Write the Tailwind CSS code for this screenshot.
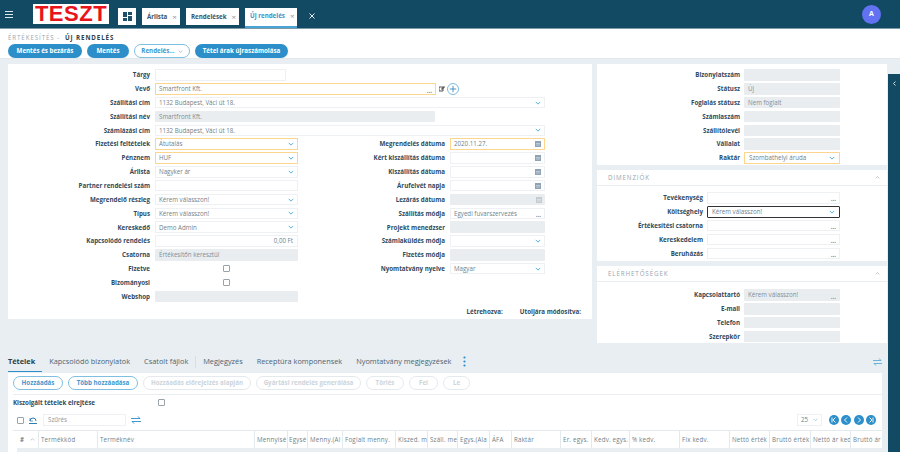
<!DOCTYPE html>
<html lang="hu">
<head>
<meta charset="UTF-8" />
<title>Új rendelés</title>
<script src="https://cdn.jsdelivr.net/npm/@tailwindcss/browser@4"></script>
</head>
<body class="bg-[#e9eef2] overflow-hidden font-['Open_Sans',sans-serif] text-[6.2px] text-[#6f7f8a]">
<div class="w-[900px] h-[452px] flex flex-col overflow-hidden">

  <!-- Header -->
  <header class="h-[29px] shrink-0 bg-[#134a63] border-b border-[#7d9aa8] flex items-start relative">
    <svg class="w-[8px] h-[7px] ml-[5px] mt-[11px]" viewBox="0 0 8 7"><path d="M0 .5h8M0 3.5h8M0 6.5h8" stroke="#dfe8ec" stroke-width="1"/></svg>
    <div class="ml-[20px] mt-[4px] w-[76px] h-[20px] bg-white flex items-center justify-center font-['Liberation_Sans',sans-serif] font-bold text-[22px] tracking-[0.5px] text-[#e8131b] leading-none">TESZT</div>
    <div class="ml-[9px] mt-[8px] w-[18px] h-[17px] bg-white flex items-center justify-center">
      <svg class="w-[9px] h-[9px]" viewBox="0 0 9 9"><path d="M0 0h4v5H0zM5 0h4v3H5zM5 4h4v5H5zM0 6h4v3H0z" fill="#1d4f68"/></svg>
    </div>
    <div class="ml-[6px] mt-[8px] w-[38px] h-[17px] bg-white flex items-center pl-[5px] gap-[5px] font-bold text-[#3d5361]">Árlista <span class="text-[#8a98a2] font-normal text-[8px] leading-none">×</span></div>
    <div class="ml-[6px] mt-[8px] w-[53px] h-[17px] bg-white flex items-center pl-[5px] gap-[5px] font-bold text-[#3d5361]">Rendelések <span class="text-[#8a98a2] font-normal text-[8px] leading-none">×</span></div>
    <div class="ml-[6px] mt-[8px] w-[52px] h-[20px] bg-white border-b-2 border-[#4aa3d4] flex items-center pl-[5px] pb-[2px] gap-[5px] font-bold text-[#3a94c8]">Új rendelés <span class="text-[#8a98a2] font-normal text-[8px] leading-none">×</span></div>
    <svg class="ml-[12px] mt-[13px] w-[6px] h-[6px]" viewBox="0 0 6 6"><path d="M.5.5l5 5M5.5.5l-5 5" stroke="#e6edf0" stroke-width="1"/></svg>
    <div class="absolute left-[862px] top-[5px] w-[19px] h-[19px] rounded-full bg-[#6272f2] flex items-center justify-center text-white font-bold text-[7px]">A</div>
  </header>

  <!-- Breadcrumb + actions -->
  <div class="h-[30px] shrink-0 bg-white pl-[8px] pt-[4px] border-b border-[#e4e9ed]">
    <div class="h-[10px] flex items-center tracking-[0.9px] leading-none">
      <span class="text-[#9aa7b0]">ÉRTÉKESÍTÉS -</span>
      <span class="ml-[5px] font-bold text-[#2c3e4a]">ÚJ RENDELÉS</span>
    </div>
    <div class="flex gap-[5px] mt-[1px] font-bold text-white">
      <div class="w-[74px] h-[14px] rounded-full bg-[#2c8fc9] flex items-center justify-center">Mentés és bezárás</div>
      <div class="w-[42px] h-[14px] rounded-full bg-[#2c8fc9] flex items-center justify-center">Mentés</div>
      <div class="w-[56px] h-[14px] rounded-full bg-white border border-[#7fbfe2] flex items-center justify-center gap-[3px] text-[#3f97cb]">Rendelés...
        <svg class="w-[5px] h-[3px]" viewBox="0 0 8 5"><path d="M1 1l3 3 3-3" stroke="#8a98a2" fill="none"/></svg>
      </div>
      <div class="w-[93px] h-[14px] rounded-full bg-[#2c8fc9] flex items-center justify-center">Tétel árak újraszámolása</div>
    </div>
  </div>

  <div class="flex flex-1 min-h-0">
    <div class="w-[888px] shrink-0 flex flex-col">
      <div class="flex pl-[8px] pt-[5px] h-[293px] shrink-0 items-start">

        <!-- Main form card -->
        <section class="w-[584px] h-[255px] bg-white pt-[4px] flex flex-col font-bold text-[#2f4a5c]">
          <div class="flex h-[13.85px] items-center"><label class="w-[142px] text-right mr-[5px]">Tárgy</label><div class="w-[131px] h-[11.5px] border border-[#eef1f4]"></div></div>
          <div class="flex h-[13.85px] items-center"><label class="w-[142px] text-right mr-[5px]">Vevő</label><div class="w-[281px] h-[12px] border border-[#fcd68f] flex items-center justify-between px-[3px] font-normal text-[#6f7f8a]">Smartfront Kft.<span class="text-[#6f7f8a] font-bold self-end leading-none">...</span></div>
            <svg class="ml-[3px] w-[6px] h-[6px]" viewBox="0 0 6 6"><path d="M0 1h4v4H0z" fill="none" stroke="#555"/><path d="M2 3l3-3 1 1-3 3z" fill="#555"/></svg>
            <svg class="ml-[2px] w-[12px] h-[12px]" viewBox="0 0 12 12"><circle cx="6" cy="6" r="5.5" fill="none" stroke="#5aa9d8" stroke-width=".8"/><path d="M6 2.8v6.4M2.8 6h6.4" stroke="#3f88b8" stroke-width=".9"/></svg>
          </div>
          <div class="flex h-[13.85px] items-center"><label class="w-[142px] text-right mr-[5px]">Szállítási cím</label><div class="w-[390px] h-[11.5px] border border-[#eef1f4] flex items-center justify-between px-[3px] font-normal text-[#6f7f8a]">1132 Budapest, Váci út 18.<svg class="w-[6px] h-[4px]" viewBox="0 0 8 5"><path d="M1 1l3 3 3-3" stroke="#4fb0e0" stroke-width="1.3" fill="none"/></svg></div></div>
          <div class="flex h-[13.85px] items-center"><label class="w-[142px] text-right mr-[5px]">Szállítási név</label><div class="w-[280px] h-[11.5px] rounded-[1px] bg-[#e9edf0] flex items-center px-[4px] font-normal text-[#808d97]">Smartfront Kft.</div></div>
          <div class="flex h-[13.85px] items-center"><label class="w-[142px] text-right mr-[5px]">Számlázási cím</label><div class="w-[390px] h-[11.5px] border border-[#eef1f4] flex items-center justify-between px-[3px] font-normal text-[#6f7f8a]">1132 Budapest, Váci út 18.<svg class="w-[6px] h-[4px]" viewBox="0 0 8 5"><path d="M1 1l3 3 3-3" stroke="#4fb0e0" stroke-width="1.3" fill="none"/></svg></div></div>

          <div class="flex">
            <!-- Left column -->
            <div class="w-[290px]">
              <div class="flex h-[13.85px] items-center"><label class="w-[142px] text-right mr-[5px]">Fizetési feltételek</label><div class="w-[143px] h-[12px] border border-[#fcd68f] flex items-center justify-between px-[3px] font-normal text-[#6f7f8a]">Átutalás<svg class="w-[6px] h-[4px]" viewBox="0 0 8 5"><path d="M1 1l3 3 3-3" stroke="#4fb0e0" stroke-width="1.3" fill="none"/></svg></div></div>
              <div class="flex h-[13.85px] items-center"><label class="w-[142px] text-right mr-[5px]">Pénznem</label><div class="w-[143px] h-[12px] border border-[#fcd68f] flex items-center justify-between px-[3px] font-normal text-[#6f7f8a]">HUF<svg class="w-[6px] h-[4px]" viewBox="0 0 8 5"><path d="M1 1l3 3 3-3" stroke="#4fb0e0" stroke-width="1.3" fill="none"/></svg></div></div>
              <div class="flex h-[13.85px] items-center"><label class="w-[142px] text-right mr-[5px]">Árlista</label><div class="w-[143px] h-[11.5px] border border-[#eef1f4] flex items-center justify-between px-[3px] font-normal text-[#6f7f8a]">Nagyker ár<svg class="w-[6px] h-[4px]" viewBox="0 0 8 5"><path d="M1 1l3 3 3-3" stroke="#4fb0e0" stroke-width="1.3" fill="none"/></svg></div></div>
              <div class="flex h-[13.85px] items-center"><label class="w-[142px] text-right mr-[5px]">Partner rendelési szám</label><div class="w-[143px] h-[11.5px] border border-[#eef1f4]"></div></div>
              <div class="flex h-[13.85px] items-center"><label class="w-[142px] text-right mr-[5px]">Megrendelő részleg</label><div class="w-[143px] h-[11.5px] border border-[#eef1f4] flex items-center justify-between px-[3px] font-normal text-[#6f7f8a]">Kérem válasszon!<svg class="w-[6px] h-[4px]" viewBox="0 0 8 5"><path d="M1 1l3 3 3-3" stroke="#4fb0e0" stroke-width="1.3" fill="none"/></svg></div></div>
              <div class="flex h-[13.85px] items-center"><label class="w-[142px] text-right mr-[5px]">Típus</label><div class="w-[143px] h-[11.5px] border border-[#eef1f4] flex items-center justify-between px-[3px] font-normal text-[#6f7f8a]">Kérem válasszon!<svg class="w-[6px] h-[4px]" viewBox="0 0 8 5"><path d="M1 1l3 3 3-3" stroke="#4fb0e0" stroke-width="1.3" fill="none"/></svg></div></div>
              <div class="flex h-[13.85px] items-center"><label class="w-[142px] text-right mr-[5px]">Kereskedő</label><div class="w-[143px] h-[11.5px] border border-[#eef1f4] flex items-center justify-between px-[3px] font-normal text-[#6f7f8a]">Demo Admin<svg class="w-[6px] h-[4px]" viewBox="0 0 8 5"><path d="M1 1l3 3 3-3" stroke="#4fb0e0" stroke-width="1.3" fill="none"/></svg></div></div>
              <div class="flex h-[13.85px] items-center"><label class="w-[142px] text-right mr-[5px]">Kapcsolódó rendelés</label><div class="w-[143px] h-[11.5px] border border-[#eef1f4] flex items-center justify-end px-[4px] font-normal text-[#6f7f8a]">0,00 Ft</div></div>
              <div class="flex h-[13.85px] items-center"><label class="w-[142px] text-right mr-[5px]">Csatorna</label><div class="w-[143px] h-[11.5px] rounded-[1px] bg-[#e9edf0] flex items-center px-[4px] font-normal text-[#808d97]">Értékesítőn keresztül</div></div>
              <div class="flex h-[13.85px] items-center"><label class="w-[142px] text-right mr-[5px]">Fizetve</label><div class="w-[143px] flex justify-center"><div class="w-[7px] h-[7px] rounded-[1px] border border-[#9aa3a9]"></div></div></div>
              <div class="flex h-[13.85px] items-center"><label class="w-[142px] text-right mr-[5px]">Bizományosi</label><div class="w-[143px] flex justify-center"><div class="w-[7px] h-[7px] rounded-[1px] border border-[#9aa3a9]"></div></div></div>
              <div class="flex h-[13.85px] items-center"><label class="w-[142px] text-right mr-[5px]">Webshop</label><div class="w-[143px] h-[11.5px] rounded-[1px] bg-[#e9edf0]"></div></div>
            </div>
            <!-- Right column -->
            <div class="w-[252px]">
              <div class="flex h-[13.85px] items-center"><label class="w-[147px] text-right mr-[5px]">Megrendelés dátuma</label><div class="w-[95px] h-[12px] border border-[#fcd68f] flex items-center justify-between px-[3px] font-normal text-[#6f7f8a]">2020.11.27.<svg class="w-[6px] h-[6px]" viewBox="0 0 6 6"><path d="M0 0h6v6H0z" fill="#8fa3b4"/><path d="M1 2.5h4M1 4h4" stroke="#dbe2e8" stroke-width=".6"/></svg></div></div>
              <div class="flex h-[13.85px] items-center"><label class="w-[147px] text-right mr-[5px]">Kért kiszállítás dátuma</label><div class="w-[95px] h-[11.5px] border border-[#eef1f4] flex items-center justify-end px-[3px]"><svg class="w-[6px] h-[6px]" viewBox="0 0 6 6"><path d="M0 0h6v6H0z" fill="#8fa3b4"/><path d="M1 2.5h4M1 4h4" stroke="#dbe2e8" stroke-width=".6"/></svg></div></div>
              <div class="flex h-[13.85px] items-center"><label class="w-[147px] text-right mr-[5px]">Kiszállítás dátuma</label><div class="w-[95px] h-[11.5px] border border-[#eef1f4] flex items-center justify-end px-[3px]"><svg class="w-[6px] h-[6px]" viewBox="0 0 6 6"><path d="M0 0h6v6H0z" fill="#8fa3b4"/><path d="M1 2.5h4M1 4h4" stroke="#dbe2e8" stroke-width=".6"/></svg></div></div>
              <div class="flex h-[13.85px] items-center"><label class="w-[147px] text-right mr-[5px]">Árufelvét napja</label><div class="w-[95px] h-[11.5px] border border-[#eef1f4] flex items-center justify-end px-[3px]"><svg class="w-[6px] h-[6px]" viewBox="0 0 6 6"><path d="M0 0h6v6H0z" fill="#8fa3b4"/><path d="M1 2.5h4M1 4h4" stroke="#dbe2e8" stroke-width=".6"/></svg></div></div>
              <div class="flex h-[13.85px] items-center"><label class="w-[147px] text-right mr-[5px]">Lezárás dátuma</label><div class="w-[95px] h-[11.5px] rounded-[1px] bg-[#e9edf0] flex items-center justify-end px-[3px]"><svg class="w-[6px] h-[6px]" viewBox="0 0 6 6"><path d="M0 0h6v6H0z" fill="#c3ccd3"/><path d="M1 2.5h4M1 4h4" stroke="#e9edf0" stroke-width=".6"/></svg></div></div>
              <div class="flex h-[13.85px] items-center"><label class="w-[147px] text-right mr-[5px]">Szállítás módja</label><div class="w-[95px] h-[11.5px] border border-[#eef1f4] flex items-center justify-between px-[3px] font-normal text-[#6f7f8a]">Egyedi fuvarszervezés<span class="font-bold self-end leading-none">...</span></div></div>
              <div class="flex h-[13.85px] items-center"><label class="w-[147px] text-right mr-[5px]">Projekt menedzser</label><div class="w-[95px] h-[11.5px] rounded-[1px] bg-[#e9edf0]"></div></div>
              <div class="flex h-[13.85px] items-center"><label class="w-[147px] text-right mr-[5px]">Számlaküldés módja</label><div class="w-[95px] h-[11.5px] border border-[#eef1f4] flex items-center justify-end px-[3px]"><svg class="w-[6px] h-[4px]" viewBox="0 0 8 5"><path d="M1 1l3 3 3-3" stroke="#4fb0e0" stroke-width="1.3" fill="none"/></svg></div></div>
              <div class="flex h-[13.85px] items-center"><label class="w-[147px] text-right mr-[5px]">Fizetés módja</label><div class="w-[95px] h-[11.5px] rounded-[1px] bg-[#e9edf0]"></div></div>
              <div class="flex h-[13.85px] items-center"><label class="w-[147px] text-right mr-[5px]">Nyomtatvány nyelve</label><div class="w-[95px] h-[11.5px] border border-[#eef1f4] flex items-center justify-between px-[3px] font-normal text-[#6f7f8a]">Magyar<svg class="w-[6px] h-[4px]" viewBox="0 0 8 5"><path d="M1 1l3 3 3-3" stroke="#4fb0e0" stroke-width="1.3" fill="none"/></svg></div></div>
            </div>
          </div>
          <div class="mt-auto mb-[3px] flex justify-end gap-[17px] pr-[11px]"><span>Létrehozva:</span><span>Utoljára módosítva:</span></div>
        </section>

        <!-- Right column cards -->
        <aside class="ml-[5px] w-[290px] flex flex-col gap-[5px] font-bold text-[#2f4a5c]">
          <section class="h-[101px] bg-white pt-[4px]">
            <div class="flex h-[13.85px] items-center"><label class="w-[143px] text-right mr-[4px]">Bizonylatszám</label><div class="w-[96px] h-[11.5px] rounded-[1px] bg-[#e9edf0]"></div></div>
            <div class="flex h-[13.85px] items-center"><label class="w-[143px] text-right mr-[4px]">Státusz</label><div class="w-[96px] h-[11.5px] rounded-[1px] bg-[#e9edf0] flex items-center px-[4px] font-normal text-[#808d97]">Új</div></div>
            <div class="flex h-[13.85px] items-center"><label class="w-[143px] text-right mr-[4px]">Foglalás státusz</label><div class="w-[96px] h-[11.5px] rounded-[1px] bg-[#e9edf0] flex items-center px-[4px] font-normal text-[#808d97]">Nem foglalt</div></div>
            <div class="flex h-[13.85px] items-center"><label class="w-[143px] text-right mr-[4px]">Számlaszám</label><div class="w-[96px] h-[11.5px] rounded-[1px] bg-[#e9edf0]"></div></div>
            <div class="flex h-[13.85px] items-center"><label class="w-[143px] text-right mr-[4px]">Szállítólevél</label><div class="w-[96px] h-[11.5px] rounded-[1px] bg-[#e9edf0]"></div></div>
            <div class="flex h-[13.85px] items-center"><label class="w-[143px] text-right mr-[4px]">Vállalat</label><div class="w-[96px] h-[11.5px] rounded-[1px] bg-[#e9edf0]"></div></div>
            <div class="flex h-[13.85px] items-center"><label class="w-[143px] text-right mr-[4px]">Raktár</label><div class="w-[96px] h-[12px] border border-[#fcd68f] flex items-center justify-between px-[4px] font-normal text-[#6f7f8a]">Szombathelyi áruda<svg class="w-[6px] h-[4px]" viewBox="0 0 8 5"><path d="M1 1l3 3 3-3" stroke="#4fb0e0" stroke-width="1.3" fill="none"/></svg></div></div>
          </section>
          <section class="h-[91px] bg-white">
            <div class="h-[16px] border-b border-[#e9eef2] flex items-center justify-between pl-[11px] pr-[7px] font-normal tracking-[0.9px] text-[#96a5b1]">DIMENZIÓK<svg class="w-[5px] h-[3px]" viewBox="0 0 8 5"><path d="M1 4l3-3 3 3" stroke="#9aa7b0" fill="none"/></svg></div>
            <div class="pt-[5px]">
              <div class="flex h-[13.85px] items-center"><label class="w-[106px] text-right mr-[4px]">Tevékenység</label><div class="w-[133px] h-[11.5px] border border-[#eef1f4] flex items-end justify-end px-[3px] text-[#6f7f8a] leading-none">...</div></div>
              <div class="flex h-[13.85px] items-center"><label class="w-[106px] text-right mr-[4px]">Költséghely</label><div class="w-[133px] h-[12px] rounded-[1px] border border-[#333] flex items-center justify-between px-[4px] font-normal text-[#6f7f8a]">Kérem válasszon!<svg class="w-[6px] h-[4px]" viewBox="0 0 8 5"><path d="M1 1l3 3 3-3" stroke="#4fb0e0" stroke-width="1.3" fill="none"/></svg></div></div>
              <div class="flex h-[13.85px] items-center"><label class="w-[106px] text-right mr-[4px]">Értékesítési csatorna</label><div class="w-[133px] h-[11.5px] border border-[#eef1f4] flex items-end justify-end px-[3px] text-[#6f7f8a] leading-none">...</div></div>
              <div class="flex h-[13.85px] items-center"><label class="w-[106px] text-right mr-[4px]">Kereskedelem</label><div class="w-[133px] h-[11.5px] border border-[#eef1f4] flex items-end justify-end px-[3px] text-[#6f7f8a] leading-none">...</div></div>
              <div class="flex h-[13.85px] items-center"><label class="w-[106px] text-right mr-[4px]">Beruházás</label><div class="w-[133px] h-[11.5px] border border-[#eef1f4] flex items-end justify-end px-[3px] text-[#6f7f8a] leading-none">...</div></div>
            </div>
          </section>
          <section class="h-[77px] bg-white">
            <div class="h-[16px] border-b border-[#e9eef2] flex items-center justify-between pl-[11px] pr-[7px] font-normal tracking-[0.9px] text-[#96a5b1]">ELÉRHETŐSÉGEK<svg class="w-[5px] h-[3px]" viewBox="0 0 8 5"><path d="M1 4l3-3 3 3" stroke="#9aa7b0" fill="none"/></svg></div>
            <div class="pt-[6px]">
              <div class="flex h-[13.85px] items-center"><label class="w-[143px] text-right mr-[4px]">Kapcsolattartó</label><div class="w-[96px] h-[11.5px] rounded-[1px] bg-[#e9edf0] flex items-center justify-between px-[4px] font-normal text-[#808d97]">Kérem válasszon!<span class="font-bold self-end leading-none">...</span></div></div>
              <div class="flex h-[13.85px] items-center"><label class="w-[143px] text-right mr-[4px]">E-mail</label><div class="w-[96px] h-[11.5px] rounded-[1px] bg-[#e9edf0]"></div></div>
              <div class="flex h-[13.85px] items-center"><label class="w-[143px] text-right mr-[4px]">Telefon</label><div class="w-[96px] h-[11.5px] rounded-[1px] bg-[#e9edf0]"></div></div>
              <div class="flex h-[13.85px] items-center"><label class="w-[143px] text-right mr-[4px]">Szerepkör</label><div class="w-[96px] h-[11.5px] rounded-[1px] bg-[#e9edf0]"></div></div>
            </div>
          </section>
        </aside>
      </div>

      <!-- Tabs -->
      <nav class="h-[21px] shrink-0 ml-[8px] w-[874px] flex items-start text-[7.35px] text-[#4b6475] leading-none relative">
        <span class="pt-[6px] h-[20px] border-b-[1.5px] border-[#2c8fc9] font-bold text-[#2c3e4a] pr-[7px]">Tételek</span>
        <span class="pt-[6px] ml-[7px]">Kapcsolódó bizonylatok</span>
        <span class="pt-[6px] ml-[14px]">Csatolt fájlok</span>
        <span class="mt-[4px] ml-[7px] h-[12px] border-l border-[#d8dfe4]"></span>
        <span class="pt-[6px] ml-[7px]">Megjegyzés</span>
        <span class="pt-[6px] ml-[14px]">Receptúra komponensek</span>
        <span class="pt-[6px] ml-[14px]">Nyomtatvány megjegyzések</span>
        <svg class="ml-[12px] mt-[4px] w-[3px] h-[11px]" viewBox="0 0 3 11"><circle cx="1.5" cy="1.5" r="1.1" fill="#2c8fc9"/><circle cx="1.5" cy="5.5" r="1.1" fill="#2c8fc9"/><circle cx="1.5" cy="9.5" r="1.1" fill="#2c8fc9"/></svg>
        <svg class="ml-auto mt-[6px] w-[9px] h-[8px]" viewBox="0 0 9 8"><path d="M0 2.5h8L6 .5M9 5.5H1l2 2" fill="none" stroke="#4aa3d4" stroke-width=".8"/></svg>
      </nav>

      <!-- Items panel -->
      <section class="flex-1 min-h-0 ml-[8px] w-[874px] bg-white overflow-hidden">
        <div class="h-[22px] ml-[5px] pt-[3px] border-b border-[#e9eef2] flex gap-[5px] font-bold">
          <div class="w-[50px] h-[14px] rounded-full border border-[#7fbfe2] flex items-center justify-center text-[#3f97cb]">Hozzáadás</div>
          <div class="w-[70px] h-[14px] rounded-full border border-[#7fbfe2] flex items-center justify-center text-[#3f97cb]">Több hozzáadása</div>
          <div class="w-[108px] h-[14px] rounded-full border border-[#e4e9ed] flex items-center justify-center text-[#ccd4da]">Hozzáadás előrejelzés alapján</div>
          <div class="w-[105px] h-[14px] rounded-full border border-[#e4e9ed] flex items-center justify-center text-[#ccd4da]">Gyártási rendelés generálása</div>
          <div class="w-[38px] h-[14px] rounded-full border border-[#e4e9ed] flex items-center justify-center text-[#ccd4da]">Törlés</div>
          <div class="w-[29px] h-[14px] rounded-full border border-[#e4e9ed] flex items-center justify-center text-[#ccd4da]">Fel</div>
          <div class="w-[27px] h-[14px] rounded-full border border-[#e4e9ed] flex items-center justify-center text-[#ccd4da]">Le</div>
        </div>
        <div class="h-[15px] flex items-center pl-[5px] font-bold text-[#2f4a5c]">
          <label class="w-[145px]">Kiszolgált tételek elrejtése</label>
          <div class="w-[7px] h-[7px] rounded-[1px] border border-[#9aa3a9]"></div>
        </div>
        <div class="h-[20px] flex items-center pl-[9px]">
          <div class="w-[7px] h-[7px] rounded-[1px] border border-[#9aa3a9]"></div>
          <svg class="ml-[5px] w-[8px] h-[8px]" viewBox="0 0 8 8"><path d="M1 5a3 3 0 1 1 6 0" fill="none" stroke="#2c7fb2"/><path d="M0 7.5h8" stroke="#2c7fb2"/><path d="M1 2v3h3" fill="none" stroke="#2c7fb2" stroke-width=".7"/></svg>
          <div class="ml-[6px] w-[83px] h-[11.5px] border border-[#eef1f4] flex items-center pl-[4px] text-[#8a98a2]">Szűrés</div>
          <svg class="ml-[5px] w-[10px] h-[8px]" viewBox="0 0 10 8"><path d="M0 2.5h9L7 .5M10 5.5H1l2 2" fill="none" stroke="#2c8fc9" stroke-width=".9"/></svg>
          <div class="ml-[656px] w-[25px] h-[11.5px] border border-[#eef1f4] flex items-center justify-between px-[3px] text-[#6f7f8a]">25<svg class="w-[5px] h-[3.5px]" viewBox="0 0 8 5"><path d="M1 1l3 3 3-3" stroke="#8fb2c9" fill="none"/></svg></div>
          <div class="ml-[7px] flex gap-[2.3px]">
            <svg class="w-[10px] h-[10px]" viewBox="0 0 10 10"><circle cx="5" cy="5" r="5" fill="#2c8fc9"/><path d="M6.5 2.5L4 5l2.5 2.5M3 2.5v5" fill="none" stroke="#fff" stroke-width=".9"/></svg>
            <svg class="w-[10px] h-[10px]" viewBox="0 0 10 10"><circle cx="5" cy="5" r="5" fill="#2c8fc9"/><path d="M6 2.5L3.5 5 6 7.5" fill="none" stroke="#fff" stroke-width=".9"/></svg>
            <svg class="w-[10px] h-[10px]" viewBox="0 0 10 10"><circle cx="5" cy="5" r="5" fill="#2c8fc9"/><path d="M4 2.5L6.5 5 4 7.5" fill="none" stroke="#fff" stroke-width=".9"/></svg>
            <svg class="w-[10px] h-[10px]" viewBox="0 0 10 10"><circle cx="5" cy="5" r="5" fill="#2c8fc9"/><path d="M3.5 2.5L6 5 3.5 7.5M7 2.5v5" fill="none" stroke="#fff" stroke-width=".9"/></svg>
          </div>
        </div>
        <!-- Table head -->
        <div class="ml-[5px] w-[869px] h-[18px] border-t border-[#e4e9ed] flex text-[#6f7f8a] tracking-[0.2px] whitespace-nowrap">
          <div class="w-[26px] flex items-center justify-between pl-[7px] pr-[3px] border-r border-[#e4e9ed] font-bold">#<svg class="w-[5px] h-[3px]" viewBox="0 0 8 5"><path d="M1 4l3-3 3 3" stroke="#9aa7b0" fill="none"/></svg></div>
          <div class="w-[59px] flex items-center pl-[2px] overflow-hidden border-r border-[#e4e9ed]">Termékkód</div>
          <div class="w-[157px] flex items-center pl-[2px] overflow-hidden border-r border-[#e4e9ed]">Terméknév</div>
          <div class="w-[33px] flex items-center pl-[2px] overflow-hidden border-r border-[#e4e9ed]">Mennyisé</div>
          <div class="w-[20px] flex items-center pl-[1px] overflow-hidden border-r border-[#e4e9ed]">Egysé</div>
          <div class="w-[35px] flex items-center pl-[2px] overflow-hidden border-r border-[#e4e9ed]">Menny.(Al</div>
          <div class="w-[53px] flex items-center pl-[2px] overflow-hidden border-r border-[#e4e9ed]">Foglalt menny.</div>
          <div class="w-[32px] flex items-center pl-[2px] overflow-hidden border-r border-[#e4e9ed]">Kiszed. m</div>
          <div class="w-[30px] flex items-center pl-[2px] overflow-hidden border-r border-[#e4e9ed]">Száll. me</div>
          <div class="w-[32px] flex items-center pl-[2px] overflow-hidden border-r border-[#e4e9ed]">Egys.(Ala</div>
          <div class="w-[22px] flex items-center pl-[2px] overflow-hidden border-r border-[#e4e9ed]">ÁFA</div>
          <div class="w-[49px] flex items-center pl-[2px] overflow-hidden border-r border-[#e4e9ed]">Raktár</div>
          <div class="w-[31px] flex items-center pl-[2px] overflow-hidden border-r border-[#e4e9ed]">Er. egys.</div>
          <div class="w-[38px] flex items-center pl-[2px] overflow-hidden border-r border-[#e4e9ed]">Kedv. egys.</div>
          <div class="w-[50px] flex items-center pl-[2px] overflow-hidden border-r border-[#e4e9ed]">% kedv.</div>
          <div class="w-[50px] flex items-center pl-[2px] overflow-hidden border-r border-[#e4e9ed]">Fix kedv.</div>
          <div class="w-[40px] flex items-center pl-[2px] overflow-hidden border-r border-[#e4e9ed]">Nettó érték</div>
          <div class="w-[41px] flex items-center pl-[2px] overflow-hidden border-r border-[#e4e9ed]">Bruttó érték</div>
          <div class="w-[40px] flex items-center pl-[2px] overflow-hidden border-r border-[#e4e9ed]">Nettó ár ked</div>
          <div class="w-[31px] flex items-center pl-[2px] overflow-hidden">Bruttó ár</div>
        </div>
        <div class="ml-[9px] w-[865px] h-[6px] bg-[#e9eef2]"></div>
      </section>
    </div>

    <!-- Collapsed side panel -->
    <div class="w-[12px] shrink-0 mt-[15px] bg-[#134a63] flex justify-center pt-[7px]">
      <svg class="w-[3px] h-[5px]" viewBox="0 0 3 5"><path d="M2.5.5L.5 2.5l2 2" fill="none" stroke="#dfe8ec" stroke-width=".9"/></svg>
    </div>
  </div>
</div>
</body>
</html>
